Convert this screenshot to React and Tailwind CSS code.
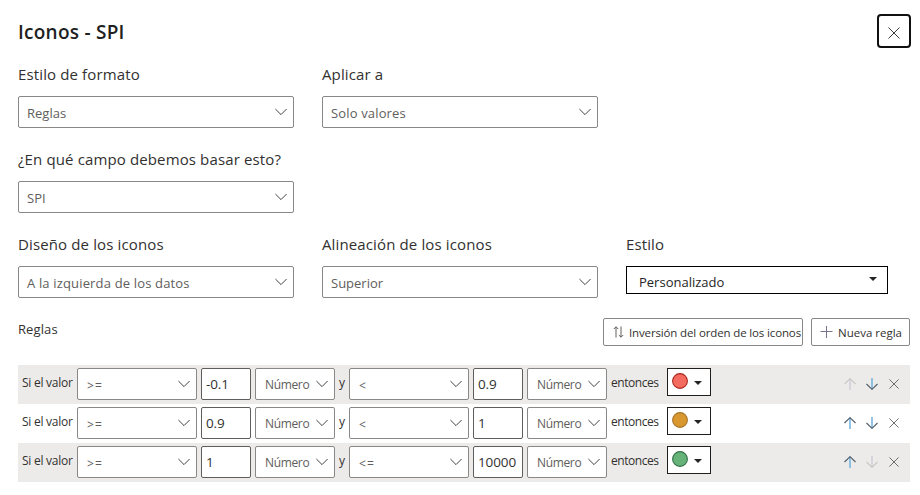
import React from "react";

function Chevron() {
  return (
    <svg className="shrink-0" width="12" height="8" viewBox="0 0 12 8" fill="none" stroke="#3b3a39" strokeWidth="0.95">
      <path d="M0.4 1 L6 6.6 L11.6 1" />
    </svg>
  );
}

function Caret({ className = "" }) {
  return (
    <svg className={"shrink-0 " + className} width="8" height="4" viewBox="0 0 8 4">
      <path d="M0 0 H8 L4 4 Z" fill="#252423" />
    </svg>
  );
}

function Cross({ size, color }) {
  return (
    <svg className="shrink-0" width={size} height={size} viewBox="0 0 12 12" fill="none" stroke={color} strokeWidth="0.95">
      <path d="M0.5 0.5 L11.5 11.5 M11.5 0.5 L0.5 11.5" />
    </svg>
  );
}

function Arrow({ down, disabled }) {
  return (
    <svg className="shrink-0" width="12" height="12" viewBox="0 0 12 12" fill="none" strokeWidth="1.1">
      <g transform={down ? "rotate(180 6 6)" : undefined}>
        <path d="M6 0.8 V12" stroke={disabled ? "#cfcdd8" : "#6fb0de"} strokeWidth="1.5" />
        <path d="M0.5 6 L6 0.7 L11.5 6" stroke={disabled ? "#c8c6c4" : "#4c5a66"} />
      </g>
    </svg>
  );
}

function Field({ label, value, labelClass, valueClass }) {
  return (
    <div className="flex h-[85px] w-[276px] flex-col">
      <div className={"h-8 whitespace-nowrap text-[15px] leading-5 tracking-[0.13px] text-[#323130] " + labelClass}>{label}</div>
      <div className="flex h-8 items-center justify-between rounded-[2px] border border-[#8a8886] bg-white pr-1.5 pl-2">
        <span className={"pt-0.5 whitespace-nowrap text-[13px] leading-5 text-[#605e5c] " + valueClass}>{value}</span>
        <Chevron />
      </div>
    </div>
  );
}

function OperatorSelect({ value }) {
  return (
    <div className="flex h-8 w-[120px] shrink-0 items-center justify-between rounded-[2px] border border-[#8a8886] bg-white pr-1.5 pl-[9px]">
      <span className="pt-[3px] text-xs leading-4 tracking-[1.2px] text-[#605e5c]">{value}</span>
      <Chevron />
    </div>
  );
}

function NumberSelect() {
  return (
    <div className="flex h-8 w-20 shrink-0 items-center justify-between rounded-[2px] border border-[#8a8886] bg-white pr-1.5 pl-[9px]">
      <span className="pt-0.5 text-xs leading-4 tracking-[-0.35px] text-[#605e5c]">Número</span>
      <Chevron />
    </div>
  );
}

function ValueInput({ value }) {
  return (
    <div className="flex h-8 w-[50px] shrink-0 items-center rounded-[2px] border border-[#605e5c] bg-white pl-1">
      <span className="text-[13.5px] leading-5 tracking-[-0.1px] text-[#323130]">{value}</span>
    </div>
  );
}

const rules = [
  { op1: ">=", v1: "-0.1", op2: "<", v2: "0.9", fill: "#f46c60", stroke: "#a8281e", first: true },
  { op1: ">=", v1: "0.9", op2: "<", v2: "1", fill: "#d9972f", stroke: "#a87526" },
  { op1: ">=", v1: "1", op2: "<=", v2: "10000", fill: "#66b279", stroke: "#34704a", last: true },
];

function Rule({ rule, shaded }) {
  return (
    <div className={"flex h-[39px] items-start pt-[3px] pl-1 " + (shaded ? "bg-[#edebe9]" : "bg-white")}>
      <div className="w-[55px] shrink-0 pt-[7px] text-xs leading-4 tracking-[-0.25px] whitespace-nowrap text-[#323130]">Si el valor</div>
      <div className="flex gap-1">
        <OperatorSelect value={rule.op1} />
        <ValueInput value={rule.v1} />
        <NumberSelect />
      </div>
      <div className="w-[14px] shrink-0 pt-[7px] pl-1 text-xs leading-4 text-[#323130]">y</div>
      <div className="flex gap-1">
        <OperatorSelect value={rule.op2} />
        <ValueInput value={rule.v2} />
        <NumberSelect />
      </div>
      <div className="w-[60px] shrink-0 pt-[7px] pl-1 text-xs leading-4 tracking-[-0.45px] text-[#323130]">entonces</div>
      <div className="flex h-7 w-11 shrink-0 items-center border border-[#201f1e] bg-white pl-1">
        <svg className="-mt-0.5" width="16" height="16" viewBox="0 0 16 16">
          <circle cx="8" cy="8" r="7.4" fill={rule.fill} stroke={rule.stroke} strokeWidth="1.1" />
        </svg>
        <Caret className="mt-0.5 ml-1.5" />
      </div>
      <div className="flex grow items-center justify-end gap-2.5 pt-2.5 pr-[11px]">
        <Arrow disabled={rule.first} />
        <Arrow down disabled={rule.last} />
        <div className="ml-px flex">
          <Cross size={10} color="#4d4b4a" />
        </div>
      </div>
    </div>
  );
}

export default function App() {
  return (
    <div className="h-[495px] w-[920px] overflow-hidden bg-white pl-[18px] font-['Open_Sans','Noto_Sans',sans-serif]">
      <header className="flex h-16 items-start justify-between pt-3.5 pr-[9px]">
        <h1 className="pt-1 text-[19px] leading-7 font-semibold tracking-[0.25px] text-[#201f1e]">Iconos - SPI</h1>
        <div className="flex size-[34px] items-center justify-center rounded border-2 border-[#111] pt-1">
          <Cross size={12} color="#323130" />
        </div>
      </header>
      <div className="flex gap-7">
        <Field label="Estilo de formato" value="Reglas" labelClass="" valueClass="" />
        <Field label="Aplicar a" value="Solo valores" labelClass="" valueClass="tracking-[0.15px]" />
      </div>
      <div className="flex">
        <Field label="¿En qué campo debemos basar esto?" value="SPI" labelClass="" valueClass="" />
      </div>
      <div className="flex gap-7">
        <Field label="Diseño de los iconos" value="A la izquierda de los datos" labelClass="" valueClass="tracking-[0.16px]" />
        <Field label="Alineación de los iconos" value="Superior" labelClass="" valueClass="" />
        <div className="w-[262px]">
          <div className="h-8 text-[15px] leading-5 tracking-[0.1px] text-[#323130]">Estilo</div>
          <div className="flex h-7 items-center justify-between border border-black bg-white pr-2.5 pl-3">
            <span className="pt-1 text-[13px] leading-5 text-[#252423]">Personalizado</span>
            <Caret className="-mt-0.5" />
          </div>
        </div>
      </div>
      <div className="flex h-[46px] items-start pr-2.5">
        <div className="grow text-[13px] leading-5 tracking-[0.1px] text-[#323130]">Reglas</div>
        <div className="-mt-px flex gap-2">
          <div className="flex h-7 w-[200px] items-center overflow-hidden rounded-[2px] border border-[#8a8886] pl-[9px]">
            <svg className="shrink-0" width="11" height="12" viewBox="0 0 11 12" fill="none" stroke="#605e5c" strokeWidth="1">
              <path d="M3 11.5 V0.8 M0.8 3 L3 0.8 L5.2 3 M8 0.5 V11.2 M5.8 9 L8 11.2 L10.2 9" />
            </svg>
            <span className="pt-0.5 pl-[5px] text-[11.5px] leading-5 tracking-[-0.14px] whitespace-nowrap text-[#323130]">Inversión del orden de los iconos</span>
          </div>
          <div className="flex h-7 w-[99px] items-center rounded-[2px] border border-[#8a8886] pl-2">
            <svg className="shrink-0" width="13" height="12" viewBox="0 0 13 12" fill="none" stroke="#77748f" strokeWidth="1">
              <path d="M0.5 5.5 H12.5 M6.5 0 V12" />
            </svg>
            <span className="pt-0.5 pl-[5px] text-[11.5px] leading-5 whitespace-nowrap text-[#323130]">Nueva regla</span>
          </div>
        </div>
      </div>
      <div className="mr-2.5">
        {rules.map((rule, i) => (
          <Rule key={i} rule={rule} shaded={i % 2 === 0} />
        ))}
      </div>
    </div>
  );
}
